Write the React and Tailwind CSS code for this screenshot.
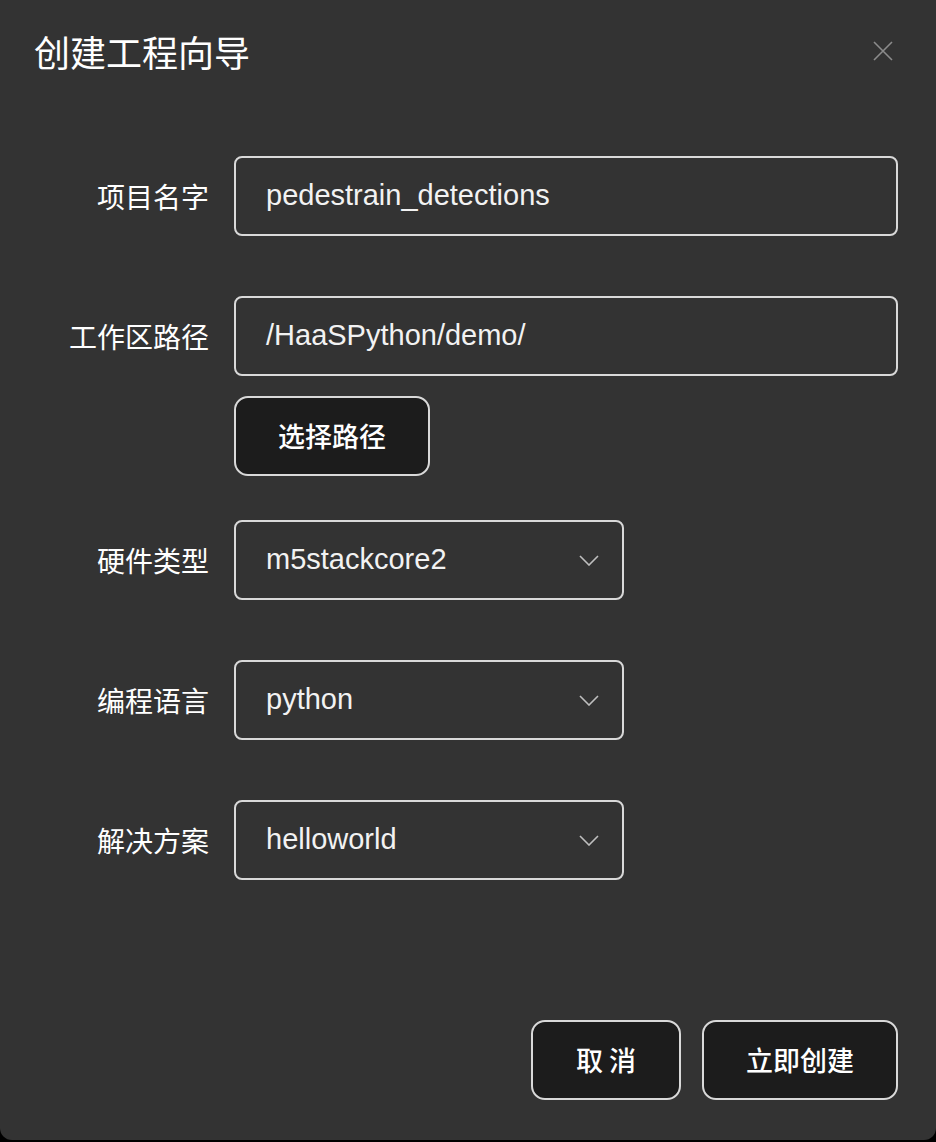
import React from "react";

const FONT = { fontFamily: '"Liberation Sans", "Noto Sans CJK SC", sans-serif' };
const CJK = { fontFamily: '"Noto Sans CJK SC", "Liberation Sans", sans-serif' };

function Label({ children }) {
  return (
    <div className="w-[200px] pr-[25px] text-right text-[28px] leading-none text-white shrink-0" style={CJK}>
      {children}
    </div>
  );
}

function Input({ value }) {
  return (
    <div className="flex-1 h-[80px] border-2 border-[#d9d9d9] rounded-[8px] pl-[30px] flex items-center text-[29px] text-[#f2f2f2]" style={FONT}>
      {value}
    </div>
  );
}

function Select({ value }) {
  return (
    <div className="w-[390px] h-[80px] border-2 border-[#d9d9d9] rounded-[8px] pl-[30px] pr-[23px] flex items-center justify-between text-[29px] text-[#f2f2f2]" style={FONT}>
      <span>{value}</span>
      <svg width="20" height="11" viewBox="0 0 20 11" fill="none">
        <path d="M1 1 L10 10 L19 1" stroke="#bfbfbf" strokeWidth="1.6" />
      </svg>
    </div>
  );
}

function Btn({ children, w }) {
  return (
    <div
      className={`${w} h-[80px] border-2 border-[#d9d9d9] rounded-[14px] bg-[#1c1c1c] flex items-center justify-center text-[27px] font-medium text-white`}
      style={CJK}
    >
      {children}
    </div>
  );
}

export default function App() {
  return (
    <div className="min-h-screen bg-black">
      <div className="h-[1140px] bg-[#333333] rounded-b-[12px] flex flex-col pl-[34px] pr-[38px]">
        <div className="pt-[27px] h-[75px] flex items-center justify-between">
          <div className="text-[36px] leading-[48px] text-white" style={CJK}>
            创建工程向导
          </div>
          <svg width="20" height="20" viewBox="0 0 20 20" className="mr-[5px]">
            <path d="M1 1 L19 19 M19 1 L1 19" stroke="#8c8c8c" strokeWidth="1.6" />
          </svg>
        </div>

        <div className="mt-[81px] flex items-center">
          <Label>项目名字</Label>
          <Input value="pedestrain_detections" />
        </div>

        <div className="mt-[60px] flex items-center">
          <Label>工作区路径</Label>
          <Input value="/HaaSPython/demo/" />
        </div>

        <div className="mt-[20px] flex">
          <div className="w-[200px] shrink-0" />
          <Btn w="w-[196px]">选择路径</Btn>
        </div>

        <div className="mt-[44px] flex items-center">
          <Label>硬件类型</Label>
          <Select value="m5stackcore2" />
        </div>

        <div className="mt-[60px] flex items-center">
          <Label>编程语言</Label>
          <Select value="python" />
        </div>

        <div className="mt-[60px] flex items-center">
          <Label>解决方案</Label>
          <Select value="helloworld" />
        </div>

        <div className="mt-[140px] flex justify-end gap-[21px]">
          <Btn w="w-[150px]">取&nbsp;消</Btn>
          <Btn w="w-[196px]">立即创建</Btn>
        </div>
      </div>
    </div>
  );
}
